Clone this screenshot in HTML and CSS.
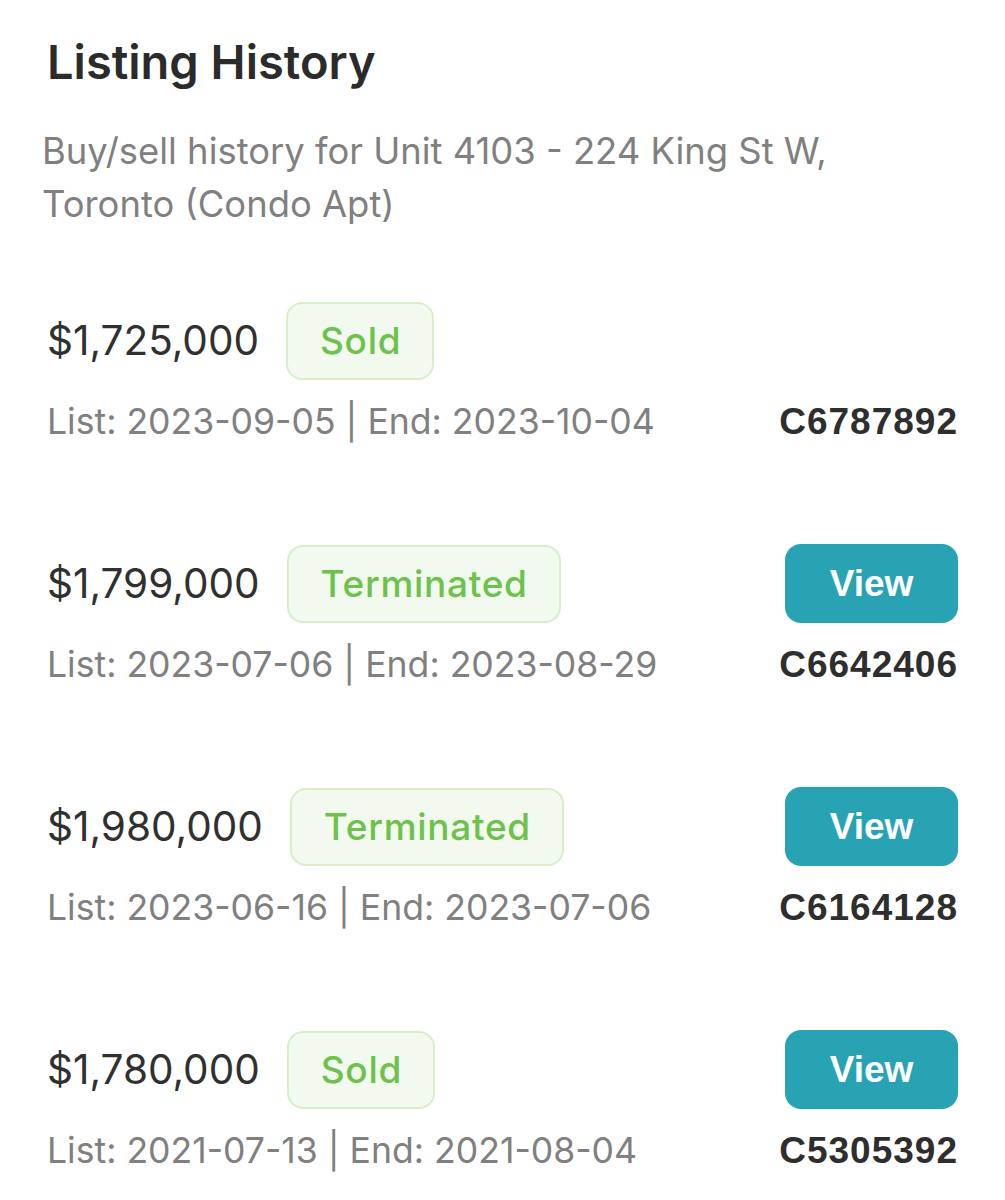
FILE: index.html
```html
<!DOCTYPE html>
<html>
<head>
<meta charset="utf-8">
<link rel="stylesheet" href="styles.css">
</head>
<body>
<div class="card">
  <h2 class="title">Listing History</h2>
  <p class="subtitle">Buy/sell history for Unit 4103 - 224 King St W, Toronto (Condo Apt)</p>
  <div class="rows">
    <div class="row">
      <div class="top">
        <div class="left"><span class="price">$1,725,000</span><span class="badge">Sold</span></div>
      </div>
      <div class="bottom"><span class="dates">List: 2023-09-05 | End: 2023-10-04</span><span class="mls">C6787892</span></div>
    </div>
    <div class="row">
      <div class="top">
        <div class="left"><span class="price">$1,799,000</span><span class="badge">Terminated</span></div>
        <button class="view">View</button>
      </div>
      <div class="bottom"><span class="dates">List: 2023-07-06 | End: 2023-08-29</span><span class="mls">C6642406</span></div>
    </div>
    <div class="row">
      <div class="top">
        <div class="left"><span class="price">$1,980,000</span><span class="badge">Terminated</span></div>
        <button class="view">View</button>
      </div>
      <div class="bottom"><span class="dates">List: 2023-06-16 | End: 2023-07-06</span><span class="mls">C6164128</span></div>
    </div>
    <div class="row">
      <div class="top">
        <div class="left"><span class="price">$1,780,000</span><span class="badge">Sold</span></div>
        <button class="view">View</button>
      </div>
      <div class="bottom"><span class="dates">List: 2021-07-13 | End: 2021-08-04</span><span class="mls">C5305392</span></div>
    </div>
  </div>
</div>
</body>
</html>
```
FILE: styles.css
```css
html, body {
  margin: 0;
  padding: 0;
  background: #ffffff;
}
body {
  font-family: "Inter", "Open Sans", sans-serif;
}
.card {
  padding: 30px 47px 0 47px;
}
.title {
  margin: 0;
  font-size: 47px;
  font-weight: 600;
  line-height: 64px;
  color: #2b2b2b;
}
.subtitle {
  margin: 31px 0 0 -5px;
  font-size: 36.4px;
  line-height: 53px;
  color: #808080;
  max-width: 860px;
}
.rows {
  margin-top: 70px;
}
.row {
  display: flex;
  flex-direction: column;
  gap: 18px;
  margin-bottom: 98px;
}
.row:last-child {
  margin-bottom: 0;
}
.top {
  display: flex;
  align-items: center;
  justify-content: space-between;
  height: 79px;
}
.left {
  display: flex;
  align-items: center;
  gap: 27px;
}
.price {
  font-size: 40.5px;
  color: #303030;
}
.badge {
  display: inline-flex;
  align-items: center;
  height: 74px;
  padding: 0 31px 0 32px;
  border: 2px solid #d6efc9;
  border-radius: 16px;
  background: #f2f9ee;
  color: #6cc24a;
  font-size: 37px;
  font-weight: 500;
  letter-spacing: 0.7px;
}
.view {
  height: 79px;
  width: 173px;
  border: none;
  border-radius: 16px;
  background: #27a3b3;
  color: #ffffff;
  font-family: "Liberation Sans", Arial, sans-serif;
  font-weight: 700;
  font-size: 37px;
  padding: 0;
}
.bottom {
  display: flex;
  justify-content: space-between;
  align-items: center;
  line-height: 48px;
}
.dates {
  font-size: 35.6px;
  color: #808080;
}
.mls {
  font-family: "Liberation Sans", Arial, sans-serif;
  font-weight: 700;
  font-size: 37px;
  letter-spacing: 1px;
  color: #2e2e2e;
}
```
